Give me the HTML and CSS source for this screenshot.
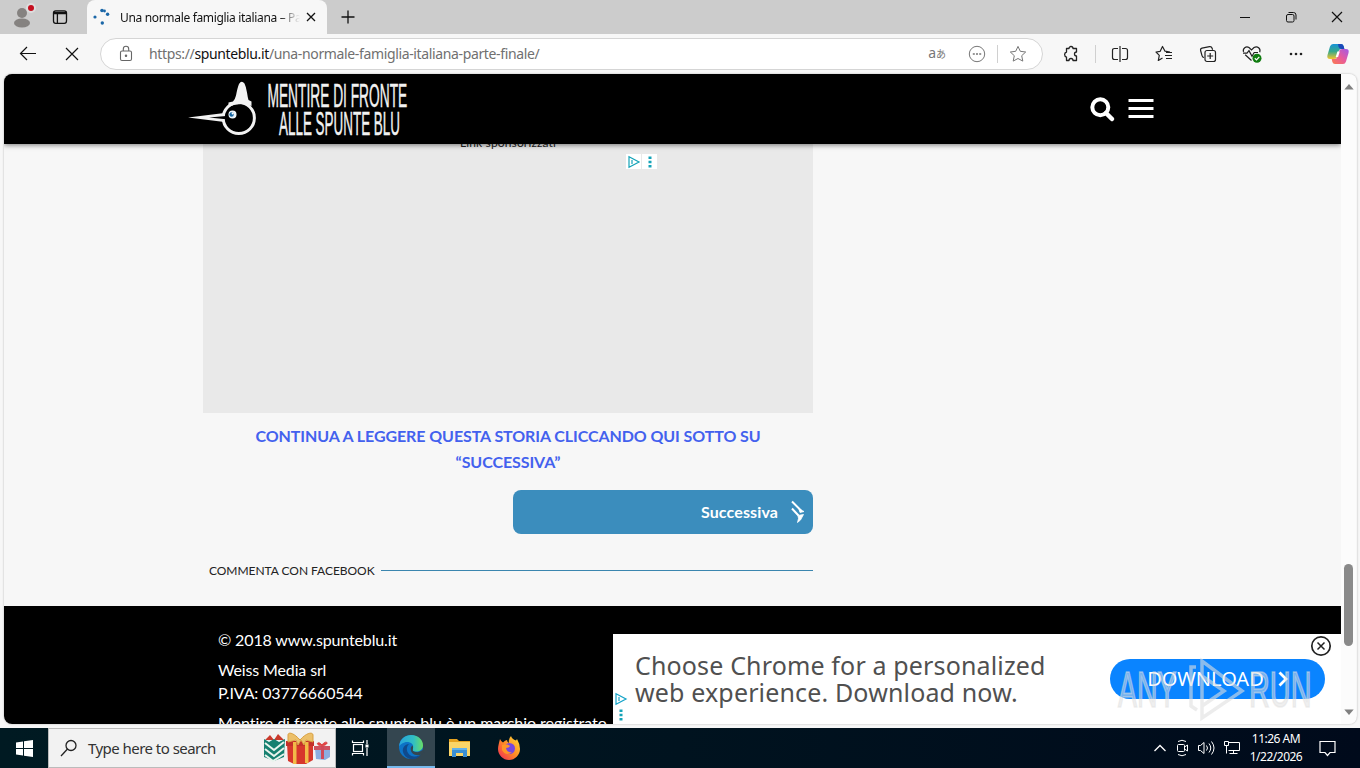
FILE: index.html
```html
<!DOCTYPE html>
<html lang="it">
<head>
  <meta charset="UTF-8"/>
  <meta name="viewport" content="width=device-width, initial-scale=1.0"/>
  <title>Una normale famiglia italiana – Parte finale</title>
  <link rel="stylesheet" href="styles.css">
</head>
<body>

<!-- Tab strip -->
<div class="tabstrip">
  <div class="profile">
    <svg width="24" height="26" viewBox="0 0 24 26"><circle cx="10" cy="10" r="5" fill="#858280"/><ellipse cx="10" cy="20" rx="8" ry="4.5" fill="#858280"/><circle cx="19" cy="5" r="5" fill="#ddd"/><circle cx="19" cy="5" r="3" fill="#c50f1f"/></svg>
  </div>
  <div class="workspaces">
    <svg width="16" height="16" viewBox="0 0 16 16" fill="none" stroke="#111" stroke-width="1.3"><rect x="1.5" y="1.8" width="13" height="12.5" rx="2.2"/><path d="M2 3.3h12M2 4.6h12M5.4 5v9" /></svg>
  </div>
  <div class="tab">
    <svg width="18" height="18" viewBox="0 0 18 18" fill="#1b67a8"><circle cx="9" cy="2.5" r="1.8"/><circle cx="11.5" cy="3" r="1.4"/><circle cx="14.6" cy="6.2" r="1.7"/><circle cx="2" cy="9" r="1.6"/><circle cx="9.3" cy="15" r="1.7"/></svg>
    <span class="tab-title">Una normale famiglia italiana – Pa</span>
    <svg class="tab-close" width="10" height="10" viewBox="0 0 10 10" stroke="#111" stroke-width="1.3"><path d="M1 1l8 8M9 1l-8 8"/></svg>
  </div>
  <svg class="new-tab" width="14" height="14" viewBox="0 0 14 14" stroke="#111" stroke-width="1.3"><path d="M7 .5v13M.5 7h13"/></svg>
  <div class="window-buttons">
    <span><svg width="12" height="12" viewBox="0 0 12 12" stroke="#111"><path d="M1 6.5h10"/></svg></span>
    <span><svg width="12" height="12" viewBox="0 0 12 12" fill="none" stroke="#111"><rect x="1.5" y="3.5" width="7.5" height="7.5" rx="1.5"/><path d="M3.5 1.5H8.5q2.5 0 2.5 2.5V8.5"/></svg></span>
    <span><svg width="12" height="12" viewBox="0 0 12 12" stroke="#111" stroke-width="1.2"><path d="M1 1l10 10M11 1L1 11"/></svg></span>
  </div>
</div>

<!-- Toolbar -->
<div class="toolbar">
  <span class="tool"><svg width="18" height="16" viewBox="0 0 18 16" fill="none" stroke="#111" stroke-width="1.2"><path d="M17 7.5H1.5M8 1L1.5 7.5 8 14"/></svg></span>
  <span class="tool"><svg width="14" height="14" viewBox="0 0 14 14" stroke="#111" stroke-width="1.2"><path d="M1 1l12 12M13 1L1 13"/></svg></span>
  <div class="address">
    <svg class="lock" width="14" height="18" viewBox="0 0 14 18" fill="none" stroke="#666" stroke-width="1.1"><rect x="1.5" y="6" width="11" height="9.5" rx="1.5"/><path d="M4.300 6V4a2.700 2.700 0 0 1 5.400 0v2"/><circle cx="7" cy="10.7" r=".7" fill="#666"/></svg>
    <span class="url">https://<b>spunteblu.it</b>/una-normale-famiglia-italiana-parte-finale/</span>
    <span class="translate">a<small>あ</small></span>
    <svg class="more-circle" width="18" height="18" viewBox="0 0 18 18" fill="none" stroke="#777"><circle cx="9" cy="9" r="7.7"/><path d="M4.800 9h2M8 9h2M11.200 9h2" stroke-width="1.6"/></svg>
    <i class="divider"></i>
    <svg width="18" height="18" viewBox="0 0 18 18" fill="none" stroke="#777" stroke-linejoin="round"><path d="M9 1.400l2.300 4.900 5.400.7-4 3.700 1.100 5.400L9 13.500l-4.800 2.600 1.100-5.400-4-3.700 5.400-.7z"/></svg>
  </div>
  <span class="tool"><svg width="18" height="18" viewBox="0 0 18 18" fill="none" stroke="#222" stroke-width="1.3"><path d="M4.500 3.500H7a2 2 0 0 1 4 0h3.500V7a2 2 0 0 0 0 4v4.500H11a2 2 0 0 0-4 0H4.500V12a2.600 2.600 0 0 1 0-5z" stroke-linejoin="round"/></svg></span>
  <i class="divider"></i>
  <span class="tool"><svg width="18" height="18" viewBox="0 0 18 18" fill="none" stroke="#222" stroke-width="1.2"><path d="M7 3.500H3.500q-2 0-2 2v7q0 2 2 2H7M11 3.500h3.500q2 0 2 2v7q0 2-2 2H11M9 1v16"/></svg></span>
  <span class="tool"><svg width="18" height="18" viewBox="0 0 18 18" fill="none" stroke="#222" stroke-width="1.2" stroke-linejoin="round"><path d="M15 7l-5-.8L7.500 1.500 5.200 6.300 1 7l3.300 3.300-1 5.200L7.500 13M11 7.500h6M10 10.500h7M11 13.500h6"/></svg></span>
  <span class="tool"><svg width="18" height="18" viewBox="0 0 18 18" fill="none" stroke="#222" stroke-width="1.2"><rect x="6" y="5.500" width="10.500" height="11" rx="2"/><path d="M11.200 8v6M8.200 11h6M5 12.500q-1.500 0-2-1.800L1.600 5.500q-.4-2 1.400-2.400l7.500-1.500q2-.3 2.600 1.600l.5 1.500"/></svg></span>
  <span class="tool"><svg width="20" height="18" viewBox="0 0 20 18" fill="none" stroke="#222" stroke-width="1.2"><path d="M9.500 15.500L3.200 9.800M1.500 6.800C.5 3.500 4 .8 7 2.600L9.500 5 12 2.600c3.500-2 7 1 5.700 4.600M1 8.200h4l2-2.500 3 5.500 2.200-3.700H16"/><circle cx="15" cy="13.2" r="4.500" fill="#107c10" stroke="none"/><path d="M12.800 13.300l1.700 1.600 2.800-3" stroke="#fff"/></svg></span>
  <span class="tool"><svg width="16" height="4" viewBox="0 0 16 4" fill="#222"><circle cx="3" cy="2" r="1.3"/><circle cx="8" cy="2" r="1.3"/><circle cx="13" cy="2" r="1.3"/></svg></span>
  <span class="tool copilot">
    <svg width="24" height="22" viewBox="0 0 24 22">
      <defs>
        <linearGradient id="cpA" x1="0" y1="0" x2="0" y2="1"><stop offset="0" stop-color="#1793d8"/><stop offset=".5" stop-color="#37a98a"/><stop offset="1" stop-color="#f4c42c"/></linearGradient>
        <linearGradient id="cpB" x1="1" y1="0" x2="0" y2="1"><stop offset="0" stop-color="#a05be8"/><stop offset=".5" stop-color="#e85a9c"/><stop offset="1" stop-color="#fb7c4d"/></linearGradient>
      </defs>
      <path d="M7 1h8q2 0 2.600 2l.7 3h-3q-2 0-2.600 2l-1.500 5.500Q10.500 16 8 16H4q-3.500 0-2.500-4L4 3.500Q4.800 1 7 1z" fill="url(#cpA)"/>
      <path d="M12 1h3q2 0 2.600 2l.8 3h-3q-2 0-2.800-2z" fill="#1b49b9"/>
      <path d="M17 21H9q-2 0-2.600-2l-.7-3h3q2 0 2.600-2l1.500-5.500Q13.500 6 16 6h4q3.500 0 2.500 4L20 18.500Q19.200 21 17 21z" fill="url(#cpB)"/>
      <path d="M11.400 8.500h2.400l-1.700 5.500H9.700z" fill="#fff"/>
    </svg>
  </span>
</div>

<!-- Page viewport -->
<div class="viewport">
  <div class="page">
    <header class="site-header">
      <svg class="logo" width="224" height="64" viewBox="0 0 224 64">
        <circle cx="49.800" cy="41" r="15.600" fill="#000" stroke="#f2f2f2" stroke-width="3"/>
        <path d="M-1 40.500L35.500 36v9z" fill="#f2f2f2"/>
        <path d="M20 40.600l17-1.600v3.200z" fill="#000"/>
        <path d="M39.500 30v-4.500l4.500-1q2-2 3-6 1.500-8 3-11.500 2.500-4 5.500-.5 1.500 3 2.500 9 .8 5.500 1.500 7.500l3 1.500v4.500q-12-4.500-23 1z" fill="#f2f2f2"/>
        <circle cx="43.500" cy="37.500" r="4" fill="#eef6fb"/><circle cx="42.600" cy="37.500" r="2.200" fill="#1768a5"/><circle cx="43.600" cy="36.600" r="1" fill="#fff"/>
        <text class="logo-text" transform="translate(78.500 29.500) scale(.55 1.100)" textLength="254" lengthAdjust="spacingAndGlyphs">MENTIRE DI FRONTE</text>
        <text class="logo-text" transform="translate(90 57.500) scale(.55 1.100)" textLength="220" lengthAdjust="spacingAndGlyphs">ALLE SPUNTE BLU</text>
      </svg>
      <div class="header-icons">
        <svg width="25" height="25" viewBox="0 0 25 25" fill="none" stroke="#fff"><circle cx="10.300" cy="10.300" r="8" stroke-width="4"/><path d="M16 16l6 6" stroke-width="4.500" stroke-linecap="round"/></svg>
        <svg width="26" height="22" viewBox="0 0 26 22" stroke="#fff" stroke-width="3"><path d="M.5 2.500h25M.5 10.500h25M.5 18.500h25"/></svg>
      </div>
    </header>

    <main class="article">
      <div class="ad-box">
        <p>Link sponsorizzati</p>
        <div class="ad-choices">
          <span><svg width="12" height="12" viewBox="0 0 12 12" fill="none" stroke="#14a3b8" stroke-width="1.2"><path d="M1 .8v10.400L11 6zM4 4v4" /></svg></span>
          <span><svg width="4" height="12" viewBox="0 0 4 12" fill="#14a3b8"><path d="M.5 .5h3v2.500h-3zM.5 4.700h3v2.500h-3zM.5 9h3v2.500h-3z"/></svg></span>
        </div>
      </div>
      <p class="continue">CONTINUA A LEGGERE QUESTA STORIA CLICCANDO QUI SOTTO SU<br>“SUCCESSIVA”</p>
      <a class="next-button">
        <span>Successiva</span>
        <svg width="14" height="24" viewBox="0 0 14 24" fill="none" stroke="#fff" stroke-width="2"><path d="M1 1.500l9.500 9.500M1 8.500l6.500 7" /><path d="M8 9l5 2.500-4 1zM7 15.500l5.500-1-3 5.500-3 2.500 1-4z" fill="#fff" stroke-width=".8"/></svg>
      </a>
      <h3 class="comments-title"><span>COMMENTA CON FACEBOOK</span></h3>
    </main>

    <footer class="site-footer">
      <p>© 2018 www.spunteblu.it</p>
      <p>Weiss Media srl<br>P.IVA: 03776660544</p>
      <p class="trademark">Mentire di fronte alle spunte blu è un marchio registrato</p>
    </footer>

    <div class="bottom-ad">
      <div class="bottom-choices">
        <svg width="12" height="12" viewBox="0 0 12 12" fill="none" stroke="#14a3c8" stroke-width="1.2"><path d="M1 .8v10.400L11 6zM4 4v4"/></svg>
        <svg width="4" height="12" viewBox="0 0 4 12" fill="#14a3b8"><path d="M.5 .5h3v2.500h-3zM.5 4.700h3v2.500h-3zM.5 9h3v2.500h-3z"/></svg>
      </div>
      <p>Choose Chrome for a personalized<br>web experience. Download now.</p>
      <a class="download"><span>DOWNLOAD</span>
        <svg width="10" height="16" viewBox="0 0 10 16" fill="none" stroke="#fff" stroke-width="2.8"><path d="M1.500 1.500L8 8l-6.500 6.500"/></svg>
      </a>
      <svg class="ad-close" width="22" height="22" viewBox="0 0 22 22" fill="none" stroke="#222" stroke-width="1.7"><circle cx="11" cy="11" r="9.2"/><path d="M7.500 7.500l7 7M14.500 7.500l-7 7" stroke-width="1.5"/></svg>
    </div>
  </div>
  <div class="scrollbar">
    <svg width="10" height="6" viewBox="0 0 10 6" fill="#808080"><path d="M5 0l4.700 5.500H.3z"/></svg>
    <div class="thumb"></div>
    <svg width="10" height="6" viewBox="0 0 10 6" fill="#808080"><path d="M5 6L.3 .5h9.400z"/></svg>
  </div>
</div>

<!-- ANY.RUN watermark over the page -->
<svg class="watermark" width="200" height="66" viewBox="0 0 200 66">
  <g fill="#e0e0e0" fill-opacity=".5" stroke="#e0e0e0" stroke-opacity=".5" stroke-width="1.5">
    <text class="wm-text" transform="translate(3 50) scale(.68 1.150)" textLength="86" lengthAdjust="spacingAndGlyphs">ANY</text>
    <text class="wm-text" transform="translate(134 50) scale(.68 1.150)" textLength="92" lengthAdjust="spacingAndGlyphs">RUN</text>
  </g>
  <g fill="none" stroke="#e0e0e0" stroke-opacity=".6" stroke-width="3.5">
    <path d="M87 52V4l40 30-40 27V49l22-15-22-15M81 10h-5v39l6 4"/>
  </g>
</svg>

<!-- Taskbar -->
<div class="taskbar">
  <div class="start"><svg width="17" height="17" viewBox="0 0 17 17" fill="#fff"><path d="M0 2.500l7-1v6.500H0zM8 1.300L17 0v8H8zM0 9h7v6.500l-7-1zM8 9h9v8l-9-1.300z"/></svg></div>
  <div class="search">
    <svg width="18" height="18" viewBox="0 0 18 18" fill="none" stroke="#222" stroke-width="1.3"><circle cx="11" cy="6.500" r="5"/><path d="M7.500 10L1 17"/></svg>
    <span>Type here to search</span>
    <svg class="gifts" width="68" height="34" viewBox="0 0 68 34">
      <path d="M2 9l5-5 4 5 4-6 6 6z" fill="#c93a2c"/>
      <path d="M1 8l5 3 5-3 5 3 6-3-1 18-10 4-10-4z" fill="#168070"/>
      <path d="M2 12l9 7 10-8M2 18l9 7 10-8M2 24l8 6 11-7" fill="none" stroke="#e9f4ed" stroke-width="2"/>
      <path d="M24 13h26v16l-7 4H31l-6-3z" fill="#d7372c"/><path d="M23 10h28v5H23z" fill="#c4302a"/>
      <path d="M30 11h3.500v22H30zM42 11h3.500v21H42z" fill="#f2ba48"/>
      <path d="M37 9C30 1 25 1 25 4v7l8-2 2 5 3-5 3 5 2-5 7 2V4c0-3-6-3-13 5z" fill="#ecc06a" stroke="#d9a040" stroke-width="1"/>
      <path d="M52 17h15v9l-5 3-9-1z" fill="#8caee0"/><path d="M51 15h16v4H51z" fill="#ce5360"/>
      <path d="M58 15h3v13h-3z" fill="#cf4a5a"/><path d="M59 15c-8-1-4-6 0-1 4-6 9-1 0 1z" fill="#e84343" stroke="#d54040"/>
    </svg>
  </div>
  <div class="task"><svg width="18" height="16" viewBox="0 0 18 16" fill="none" stroke="#fff" stroke-width="1.2"><rect x="1.500" y="4.500" width="9" height="7"/><path d="M.5 .5v2h11v-2M.5 15.500v-2h11v2M15 0v4M15 8v8"/><path d="M13.500 4.500h3v3h-3z" fill="#fff" stroke="none"/></svg></div>
  <div class="task active">
    <svg width="26" height="26" viewBox="0 0 26 26">
      <defs><linearGradient id="edgeA" x1="0" x2="1"><stop offset="0" stop-color="#28a4dc"/><stop offset=".6" stop-color="#31bfc3"/><stop offset="1" stop-color="#6add65"/></linearGradient></defs>
      <circle cx="13" cy="13" r="12" fill="#0d73c6"/>
      <path d="M1.200 12C2 4.500 7.500 1 13 1c8 0 12 5.500 12 10.500 0 4-3.500 6-7 6-3 0-4.500-1.200-3.300-3C17 10 11 7 6.500 8.500 3.500 9.300 2 11 1.200 12z" fill="url(#edgeA)"/>
      <path d="M11 10c-4 3-2.500 12 5 12.500 3 .3 5.500-1 7-2C18 28 7 26 5 18c-1-4 2-8 6-8z" fill="#104a8c"/>
      <path d="M14.500 11.500c2 3-2 5.500 3 6.500 3 .5 5-.5 7-2l2 3-3 1.500C18 23 11 19 13 13z" fill="#344650"/>
    </svg>
  </div>
  <div class="task"><svg width="22" height="20" viewBox="0 0 22 20"><path d="M0 1h8l2 2h11v5H0z" fill="#e6a21f"/><path d="M0 4h21v14H0z" fill="#fbd568"/><path d="M3 10h15v9h-4v-4H7v4H3z" fill="#3b8fd4"/><path d="M3 10h15v2H3z" fill="#62b1ea"/></svg></div>
  <div class="task">
    <svg width="24" height="24" viewBox="0 0 24 24">
      <defs><linearGradient id="fox" x1="1" y1="0" x2="0" y2="1"><stop offset="0" stop-color="#ffe138"/><stop offset=".5" stop-color="#ff8b26"/><stop offset="1" stop-color="#ef2359"/></linearGradient></defs>
      <path d="M3 3q1 2.500 3 3.500Q8 4 10 4q0 2 2 3-1-4 2-7 1 3 5 4.500l1-1.500q3 5 3 10c0 6-5 11-11 11S1 19 1 13c0-3 1-6 2-10z" fill="url(#fox)"/>
      <circle cx="12.500" cy="12.500" r="5.500" fill="#7647df"/><path d="M5 9q5-2 8 1-1 2-4 2 1 5 6 4-6 5-10-2z" fill="#ff9627"/>
    </svg>
  </div>
  <div class="tray">
    <svg width="14" height="8" viewBox="0 0 14 8" fill="none" stroke="#fff" stroke-width="1.3"><path d="M1.500 7L7 1.500 12.500 7"/></svg>
    <svg width="14" height="18" viewBox="0 0 14 18" fill="none" stroke="#fff"><rect x="2.500" y="5.500" width="7" height="7" rx="1"/><path d="M9.500 8l3-2v6l-3-2M3 2.500q4-2.500 8 0M3 15.500q4 2.500 8 0"/></svg>
    <svg width="18" height="16" viewBox="0 0 18 16" fill="none" stroke="#fff"><path d="M1.500 5.500h2L7 2.500v11l-3.500-3h-2zM9.500 5.500q2 2.500 0 5M12 3.500q3.500 4.500 0 9M14.500 1.500q5 6.500 0 13"/></svg>
    <svg width="18" height="16" viewBox="0 0 18 16" fill="none" stroke="#fff"><path d="M5.500 2.500h11v8h-11M10.500 10.500v3M6.500 13.500h8M1.500 1.500h4v4h-4zM3.500 5.500v8"/></svg>
    <div class="clock">11:26 AM<br>1/22/2026</div>
    <svg class="notify" width="17" height="17" viewBox="0 0 17 17" fill="none" stroke="#fff" stroke-width="1.2"><path d="M1 1.500h15v11h-5l-2.500 3-2.500-3H1z"/></svg>
  </div>
</div>

</body>
</html>
```
FILE: styles.css
```css
* {
  box-sizing: border-box;
}

body {
  margin: 0;
  width: 1360px;
  height: 768px;
  overflow: hidden;
  position: relative;
  background: #f7f7f7;
  font-family: 'Noto Sans', 'Open Sans', sans-serif;
  color: #111;
}

svg {
  display: block;
  flex: none;
  overflow: visible;
}

p, h3 {
  margin: 0;
}

/* browser */
.tabstrip {
  height: 34px;
  background: #ccc;
  display: flex;
  align-items: center;
}

.profile {
  width: 48px;
  padding: 0 0 2px 12px;
}

.workspaces {
  width: 39px;
  padding-left: 4px;
}

.tab {
  width: 240px;
  height: 34px;
  padding: 0 10px 0 6px;
  background: #f7f7f7;
  border-radius: 8px 8px 0 0;
  display: flex;
  align-items: center;
}

.tab-title {
  width: 180px;
  margin-left: 9px;
  overflow: hidden;
  white-space: nowrap;
  font-size: 12px;
  letter-spacing: -0.33px;
  -webkit-mask-image: linear-gradient(90deg, #000 88%, transparent);
  mask-image: linear-gradient(90deg, #000 88%, transparent);
}

.tab-close {
  margin-left: 6px;
}

.new-tab {
  margin-left: 14px;
}

.window-buttons {
  margin-left: auto;
  display: flex;
}

.window-buttons span {
  width: 46px;
  display: flex;
  justify-content: center;
}

.toolbar {
  height: 40px;
  padding-left: 6px;
  display: flex;
  align-items: center;
}

.tool {
  width: 44px;
  display: flex;
  justify-content: center;
}

.copilot {
  width: 40px;
}

.divider {
  width: 1px;
  height: 18px;
  background: #d0d0d0;
}

.toolbar > .divider {
  margin: 0 2px;
}

.address {
  width: 943px;
  height: 32px;
  margin: 0 6px;
  padding: 0 15px 0 18px;
  background: #fff;
  border: 1px solid #d5d5d5;
  border-radius: 16px;
  display: flex;
  align-items: center;
}

.url {
  margin-left: 16px;
  flex: 1;
  font-size: 14px;
  letter-spacing: -0.36px;
  line-height: 18px;
  color: #707070;
}

.url b {
  font-weight: normal;
  color: #111;
}

.translate {
  font-size: 14px;
  line-height: 18px;
  padding-bottom: 2px;
  color: #777;
  margin-right: 22px;
}

.translate small {
  font-family: 'Noto Sans CJK JP', sans-serif;
  font-size: 10px;
}

.address .divider {
  margin: 0 11px;
}

/* page */
.viewport {
  height: 650px;
  margin: 0 3px 0 4px;
  display: flex;
  border-radius: 8px;
  overflow: hidden;
  box-shadow: 0 0 2px #aaa;
}

.page {
  width: 1337px;
  position: relative;
  overflow: hidden;
  background: #f7f7f7;
  font-family: Lato, sans-serif;
}

.site-header {
  position: relative;
  z-index: 2;
  height: 70px;
  padding: 0 187px 0 185px;
  background: #000;
  box-shadow: 0 1px 5px rgba(0, 0, 0, 0.5);
  display: flex;
  justify-content: space-between;
  align-items: center;
}

.logo-text {
  font-family: 'Liberation Sans', sans-serif;
  font-size: 30px;
  fill: #f2f2f2;
  stroke: #f2f2f2;
  stroke-width: 0.4px;
}

.header-icons {
  display: flex;
  align-items: center;
  gap: 13px;
}

.article {
  width: 610px;
  height: 472px;
  margin: -10px 0 0 199px;
}

.ad-box {
  height: 279px;
  background: #e9e9e9;
  text-align: center;
}

.ad-box p {
  font-size: 12px;
  line-height: 18px;
  letter-spacing: 0.15px;
  color: #222;
}

.ad-choices {
  margin: 2px 156px 0 auto;
  width: 31px;
  display: flex;
  gap: 1px;
}

.ad-choices span {
  width: 15px;
  height: 15px;
  background: #fff;
  display: flex;
  align-items: center;
  justify-content: center;
}

.continue {
  margin-top: 10px;
  text-align: center;
  font-size: 16px;
  line-height: 26px;
  letter-spacing: -0.08px;
  font-weight: bold;
  color: #4361ee;
}

.next-button {
  width: 300px;
  height: 44px;
  margin: 15px 0 0 310px;
  padding-right: 8px;
  background: #3b8dbd;
  border-radius: 8px;
  color: #fff;
  font-size: 16px;
  font-weight: bold;
  display: flex;
  align-items: center;
  justify-content: flex-end;
  gap: 13px;
}

.next-button span {
  letter-spacing: 0.12px;
  padding-bottom: 2px;
}

.comments-title {
  margin-top: 27px;
  padding-left: 6px;
  font-size: 12px;
  line-height: 19px;
  font-weight: normal;
  color: #222;
  display: flex;
  align-items: center;
}

.comments-title::after {
  content: "";
  flex: 1;
  height: 1px;
  margin: 0 0 1px 6px;
  background: #3b86af;
}

.comments-title span {
  letter-spacing: -0.04px;
}

.site-footer {
  height: 118px;
  padding: 22px 0 0 214px;
  background: #000;
  color: #fff;
  font-size: 16px;
  line-height: 23px;
  letter-spacing: -0.14px;
}

.site-footer p {
  margin-bottom: 7px;
  white-space: nowrap;
}

.site-footer .trademark {
  letter-spacing: -0.04px;
}

.bottom-ad {
  position: absolute;
  right: 0;
  bottom: 0;
  width: 728px;
  height: 90px;
  background: #fff;
  display: flex;
  align-items: center;
}

.bottom-choices {
  width: 22px;
  padding-left: 2px;
  align-self: flex-end;
}

.bottom-choices svg + svg {
  margin: 4px 0 3px 4px;
}

.bottom-ad p {
  width: 475px;
  font-family: 'Noto Sans', sans-serif;
  font-size: 25px;
  line-height: 27px;
  letter-spacing: 0.15px;
  color: #505050;
}

.download {
  width: 215px;
  height: 40px;
  background: #0a84ff;
  border-radius: 20px;
  color: #fff;
  font-family: 'Noto Sans', sans-serif;
  font-size: 20px;
  display: flex;
  align-items: center;
  justify-content: center;
  gap: 14px;
}

.download span {
  padding-bottom: 2px;
}

.ad-close {
  position: absolute;
  top: 1px;
  right: 9px;
}

.scrollbar {
  width: 15px;
  padding: 10px 0 9px;
  background: #fcfcfc;
  display: flex;
  flex-direction: column;
  align-items: center;
}

.thumb {
  width: 9px;
  height: 82px;
  margin: 474px 0 auto;
  background: #8a8a8a;
  border-radius: 5px;
}

.watermark {
  position: absolute;
  left: 1115px;
  top: 657px;
}

.wm-text {
  font-family: 'Liberation Sans', sans-serif;
  font-size: 44px;
}

/* taskbar */
.taskbar {
  height: 40px;
  margin-top: 4px;
  background: linear-gradient(90deg, #001a22, #00131f 50%, #000a1b);
  display: flex;
}

.start, .task {
  width: 48px;
  display: flex;
  align-items: center;
  justify-content: center;
}

.task {
  width: 49px;
}

.task.active {
  width: 48px;
  margin: 0 0 0 2px;
  background: #344650;
  border-bottom: 2px solid #76b9ed;
}

.search {
  width: 288px;
  padding: 0 4px 0 11px;
  background: #f2f2f2;
  border: 1px solid #bbb;
  display: flex;
  align-items: center;
}

.search span {
  margin-left: 10px;
  font-size: 15px;
  letter-spacing: -0.54px;
  color: #333;
}

.gifts {
  margin-left: auto;
}

.tray {
  margin-left: auto;
  padding-right: 24px;
  display: flex;
  align-items: center;
  gap: 8px;
}

.clock {
  width: 54px;
  margin-right: 8px;
  text-align: center;
  white-space: nowrap;
  color: #fff;
  font-size: 12px;
  line-height: 18px;
  letter-spacing: -0.5px;
}
```
